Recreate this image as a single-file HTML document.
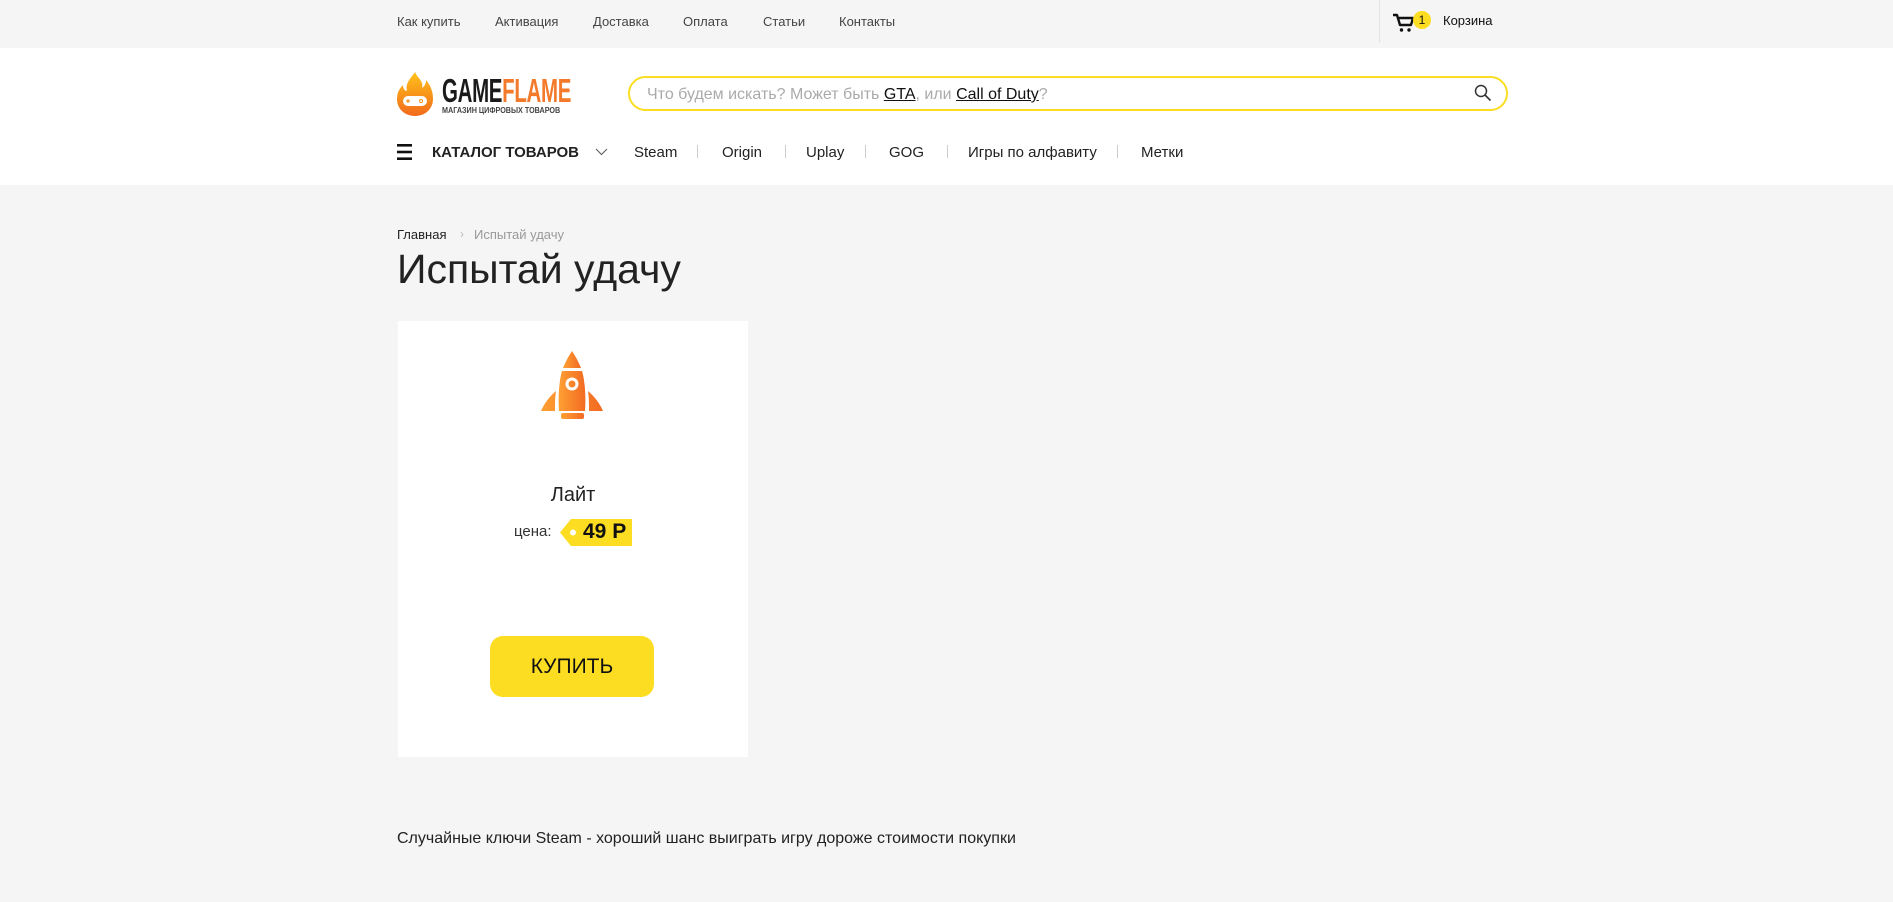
<!DOCTYPE html>
<html><head><meta charset="utf-8">
<style>
*{margin:0;padding:0;box-sizing:border-box}
body{width:1893px;height:902px;background:#f5f5f5;font-family:"Liberation Sans",Arial,sans-serif;color:#222;position:relative;overflow:hidden}
.abs{position:absolute}
.top a{position:absolute;top:14px;font-size:13px;color:#444;text-decoration:none;white-space:nowrap}
.hdr{position:absolute;left:0;top:48px;width:1893px;height:137px;background:#fff}
.nav span{position:absolute;top:144px;font-size:15px;color:#222;white-space:nowrap}
.sep{position:absolute;top:145px;width:1px;height:13px;background:#ccc}
</style></head><body>
<div class="top">
<a style="left:397px">Как купить</a>
<a style="left:495px">Активация</a>
<a style="left:593px">Доставка</a>
<a style="left:683px">Оплата</a>
<a style="left:763px">Статьи</a>
<a style="left:839px">Контакты</a>
</div>
<div class="abs" style="left:1379px;top:0;width:1px;height:43px;background:#e2e2e2"></div>
<svg class="abs" style="left:1392px;top:13px" width="24" height="20" viewBox="0 0 24 20"><path d="M1 2h4l3 10h11l2-7H7" fill="none" stroke="#111" stroke-width="2.4" stroke-linejoin="round"/><circle cx="9.5" cy="17" r="1.7" fill="#111"/><circle cx="17" cy="17" r="1.7" fill="#111"/></svg>
<div class="abs" style="left:1413px;top:11px;width:18px;height:18px;border-radius:50%;background:#fddd22;font-size:12px;text-align:center;line-height:18px;color:#111">1</div>
<div class="abs" style="left:1443px;top:13px;font-size:13px;color:#111">Корзина</div>

<div class="hdr"></div>
<svg class="abs" style="left:397px;top:70px" width="36" height="48" viewBox="0 0 36 48">
<defs><linearGradient id="f" x1="0" y1="0" x2="0" y2="1"><stop offset="0" stop-color="#ffc21a"/><stop offset="1" stop-color="#f26a1b"/></linearGradient></defs>
<path d="M18 2c3 7 9 9 7 16 3-2 4-5 4-8 5 6 7 12 7 19 0 10-8 17-18 17S0 39 0 29c0-6 2-10 6-14 0 4 2 6 4 6C8 13 14 8 18 2z" fill="url(#f)"/>
<rect x="6" y="26" width="24" height="10" rx="5" fill="#fff"/>
<path d="M11 29v4M9 31h4" stroke="#f7931e" stroke-width="1.2"/><circle cx="24" cy="31" r="1.5" fill="none" stroke="#f7931e"/>
</svg>
<div class="abs" style="left:442px;top:74px;font-size:33px;font-weight:bold;letter-spacing:-0.5px;transform:scaleX(0.62);transform-origin:left top;white-space:nowrap;line-height:33px"><span style="color:#1a1a1a">GAME</span><span style="color:#f47a2b">FLAME</span></div>
<div class="abs" style="left:442px;top:106px;font-size:8px;font-weight:bold;color:#444;white-space:nowrap;transform:scaleX(0.9);transform-origin:left top">МАГАЗИН ЦИФРОВЫХ ТОВАРОВ</div>

<div class="abs" style="left:628px;top:76px;width:880px;height:35px;border:2px solid #fddd22;border-radius:18px;background:#fff"></div>
<div class="abs" style="left:647px;top:86px;font-size:16px;color:#aaa;white-space:nowrap">Что будем искать? Может быть <span style="color:#111;text-decoration:underline">GTA</span>, или <span style="color:#111;text-decoration:underline">Call of Duty</span>?</div>
<svg class="abs" style="left:1474px;top:84px" width="18" height="18" viewBox="0 0 18 18"><circle cx="7" cy="7" r="5.5" fill="none" stroke="#333" stroke-width="1.5"/><path d="M11 11l5.5 5.5" stroke="#333" stroke-width="1.6"/></svg>

<svg class="abs" style="left:397px;top:144px" width="15" height="16"><rect y="0" width="15" height="2.6" fill="#111"/><rect y="6.7" width="15" height="2.6" fill="#111"/><rect y="13.4" width="15" height="2.6" fill="#111"/></svg>
<div class="nav">
<span style="left:432px;font-weight:bold;font-size:15px">КАТАЛОГ ТОВАРОВ</span>
<svg class="abs" style="left:595px;top:148px" width="13" height="8"><path d="M1 1l5.5 5.5L12 1" fill="none" stroke="#666" stroke-width="1.2"/></svg>
<span style="left:634px">Steam</span>
<div class="sep" style="left:697px"></div>
<span style="left:722px">Origin</span>
<div class="sep" style="left:785px"></div>
<span style="left:806px">Uplay</span>
<div class="sep" style="left:865px"></div>
<span style="left:889px">GOG</span>
<div class="sep" style="left:947px"></div>
<span style="left:968px">Игры по алфавиту</span>
<div class="sep" style="left:1117px"></div>
<span style="left:1141px">Метки</span>
</div>

<div class="abs" style="left:397px;top:227px;font-size:13px;color:#222">Главная</div>
<div class="abs" style="left:460px;top:227px;font-size:12px;color:#bbb">›</div>
<div class="abs" style="left:474px;top:227px;font-size:13px;color:#999">Испытай удачу</div>
<div class="abs" style="left:397px;top:246px;font-size:41px;color:#222;white-space:nowrap">Испытай удачу</div>

<div class="abs" style="left:398px;top:321px;width:350px;height:436px;background:#fff"></div>
<svg class="abs" style="left:540px;top:350px" width="64" height="72" viewBox="540 350 64 72">
<defs><linearGradient id="r" x1="0" y1="0" x2="1" y2="0"><stop offset="0" stop-color="#ffa033"/><stop offset="1" stop-color="#f26a22"/></linearGradient></defs>
<path d="M572 351c-4 6-7 12-9 17h18c-2-5-5-11-9-17z" fill="url(#r)"/>
<path d="M562 371c-3 10-4 26-3 40h26c1-14 0-30-3-40z" fill="url(#r)"/>
<circle cx="572" cy="384" r="5" fill="none" stroke="#fff" stroke-width="3"/>
<path d="M556 391c-7 6-12 13-15 20h14c0-7 0-14 1-20zM588 391c7 6 12 13 15 20h-14c0-7 0-14-1-20z" fill="url(#r)"/>
<rect x="561" y="413" width="23" height="6" rx="2" fill="url(#r)"/>
</svg>
<div class="abs" style="left:398px;top:484px;width:350px;text-align:center;font-size:20px;color:#222">Лайт</div>
<div class="abs" style="left:514px;top:523px;font-size:15px;color:#333">цена:</div>
<svg class="abs" style="left:560px;top:519px" width="72" height="27"><path d="M11 0h61v27H11L0 13.5z" fill="#fddd22"/><circle cx="13" cy="13.5" r="3" fill="#fff"/></svg>
<div class="abs" style="left:583px;top:520px;font-size:21px;font-weight:bold;color:#111">49 Р</div>
<div class="abs" style="left:490px;top:636px;width:164px;height:61px;border-radius:13px;background:#fddd22;text-align:center;line-height:61px;font-size:21px;color:#111">КУПИТЬ</div>

<div class="abs" style="left:397px;top:830px;font-size:16px;color:#222;white-space:nowrap">Случайные ключи Steam - хороший шанс выиграть игру дороже стоимости покупки</div>
</body></html>
